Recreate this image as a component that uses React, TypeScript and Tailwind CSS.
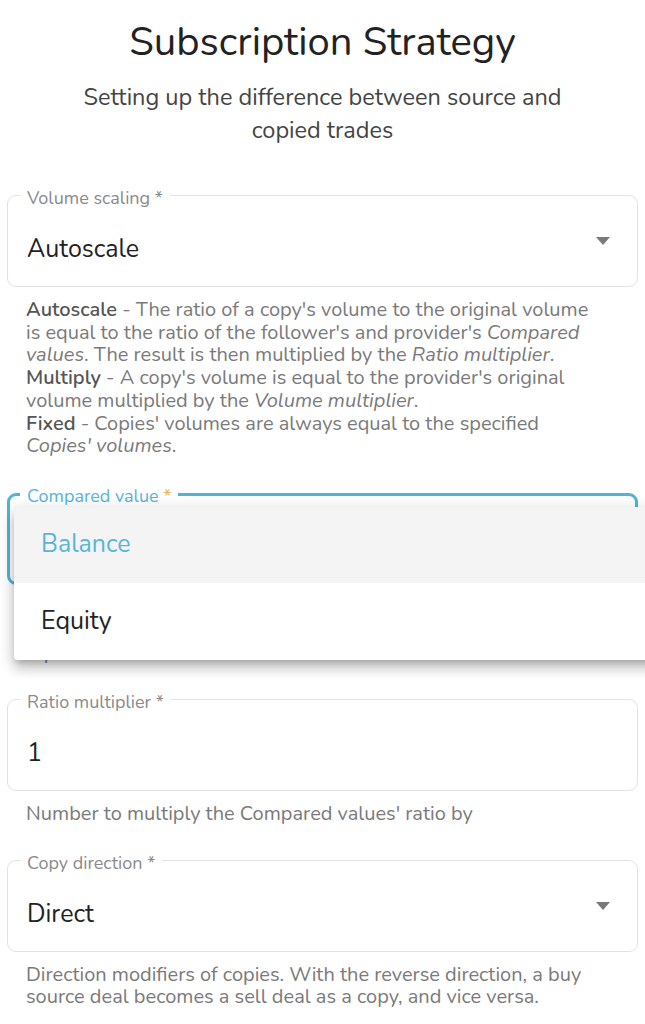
import React from "react";

const FONT = { fontFamily: '"Nunito", "Lato", "Open Sans", sans-serif' };

function Caret() {
  return (
    <svg width="16" height="8" viewBox="0 0 16 8" className="absolute right-[26px] top-[41px]">
      <path d="M1 0 L15 0 L8 8 Z" fill="#7a7a7a" />
    </svg>
  );
}

function Field({
  label,
  value,
  select,
}: {
  label: string;
  value: string;
  select?: boolean;
}) {
  return (
    <div className="relative h-[92px] rounded-[9px] border border-[#e2e2e2]">
      <div className="absolute -top-[9px] left-[12px] bg-white px-[7px] text-[18px] leading-[22px] text-[#8a8a8a]">
        {label} *
      </div>
      <div className="absolute left-[19px] top-[38px] text-[25px] leading-[30px] text-[#222]">{value}</div>
      {select && <Caret />}
    </div>
  );
}

function Help({ children, className = "" }: { children: React.ReactNode; className?: string }) {
  return (
    <div className={"pl-[19px] pr-[36px] text-[20px] leading-[22.7px] text-[#7a7a7a] " + className}>{children}</div>
  );
}

export default function App() {
  return (
    <div className="min-h-[1024px] w-full overflow-hidden bg-white" style={FONT}>
      <div className="px-[7px]">
        <h1 className="pt-[18px] text-center text-[40px] leading-[48px] text-[#222]">
          Subscription Strategy
        </h1>
        <p className="mx-auto mt-[15px] max-w-[510px] text-center text-[23.5px] leading-[33px] text-[#444]">
          Setting up the difference between source and copied trades
        </p>

        <div className="mt-[48px]">
          <Field label="Volume scaling" value="Autoscale" select />
          <Help className="mt-[12px]">
            <b className="font-semibold text-[#555]">Autoscale</b> - The ratio of a copy's volume to the original volume
            is equal to the ratio of the follower's and provider's <i>Compared values</i>. The result is then multiplied
            by the <i>Ratio multiplier</i>.
            <br />
            <b className="font-semibold text-[#555]">Multiply</b> - A copy's volume is equal to the provider's original
            volume multiplied by the <i>Volume multiplier</i>.
            <br />
            <b className="font-semibold text-[#555]">Fixed</b> - Copies' volumes are always equal to the specified{" "}
            <i>Copies' volumes</i>.
          </Help>
        </div>

        <div className="relative mt-[35px]">
          <div className="relative h-[92px] rounded-[9px] border-[3px] border-[#52b3d9]">
            <div className="absolute -top-[11px] left-[10px] bg-white px-[7px] text-[18px] leading-[22px] text-[#5ab5d8]">
              Compared value <span className="text-[#f2b64a]">*</span>
            </div>
          </div>
          <Help className="mt-[12px]">
            The value of the follower's and provider's accounts
            <br />
            that is compared when the volume of copies is
            <br />
            equal to their ratio.
          </Help>
          <div className="absolute left-[7px] top-[14px] z-10 w-[680px] rounded-[4px] bg-white shadow-[0_5px_6px_-3px_rgba(0,0,0,0.2),0_9px_12px_1px_rgba(0,0,0,0.14),0_3px_16px_2px_rgba(0,0,0,0.12)]">
            <div className="flex h-[76px] items-center bg-[#f4f4f4] px-[27px] text-[25px] text-[#5ab5d8]">Balance</div>
            <div className="flex h-[77px] items-center px-[27px] text-[25px] text-[#222]">Equity</div>
          </div>
        </div>

        <div className="mt-[34px]">
          <Field label="Ratio multiplier" value="1" />
          <Help className="mt-[12px]">Number to multiply the Compared values' ratio by</Help>
        </div>

        <div className="mt-[34px]">
          <Field label="Copy direction" value="Direct" select />
          <Help className="mt-[12px]">
            Direction modifiers of copies. With the reverse direction, a buy source deal becomes a sell deal as a copy,
            and vice versa.
          </Help>
        </div>
      </div>
    </div>
  );
}
